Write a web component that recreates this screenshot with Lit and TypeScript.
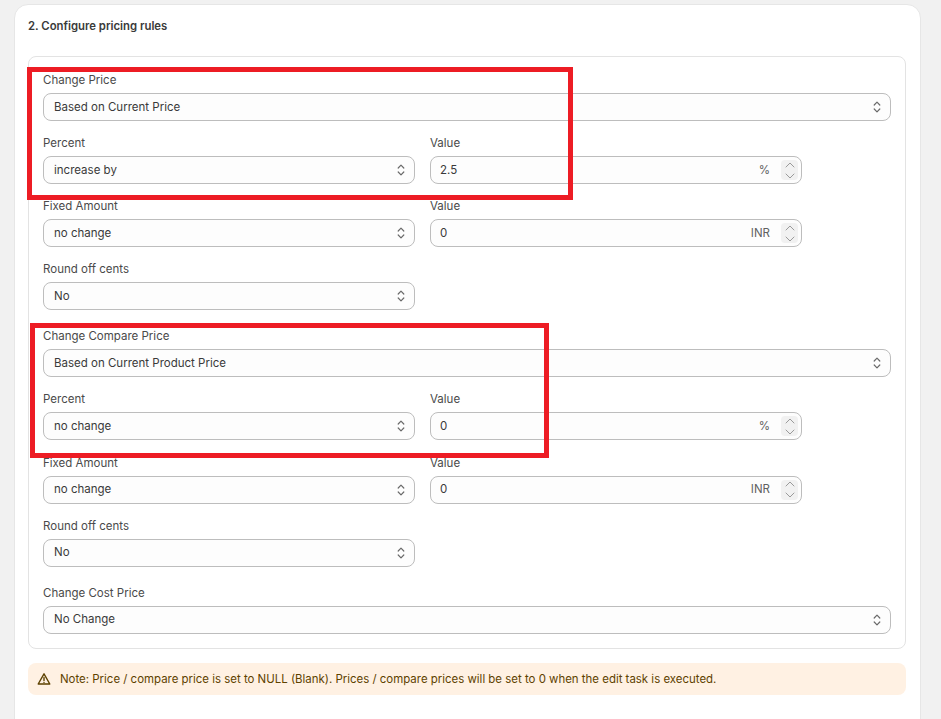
import { LitElement, html, css } from "lit";
import { customElement } from "lit/decorators.js";

const selectIcon = html`<svg class="sel-icon" viewBox="0 0 10 16" width="10" height="16" fill="none" stroke="#6a6a6a" stroke-width="1.2" stroke-linecap="round" stroke-linejoin="round"><path d="M2.2 6 5 3.2 7.8 6"/><path d="M2.2 10 5 12.8 7.8 10"/></svg>`;
const warnIcon = html`<svg class="warn-icon" viewBox="0 0 14 14" width="14" height="14" fill="none" stroke="#5e4200" stroke-width="1.4" stroke-linejoin="round" stroke-linecap="round"><path d="M7 1.8 1.2 12h11.6z"/><path d="M7 5.6v3"/><path d="M7 10.4v.1"/></svg>`;

const sel = (label: string, value: string) => html`<div class="field">
  <div class="label">${label}</div>
  <div class="control"><span class="val">${value}</span>${selectIcon}</div>
</div>`;

const num = (label: string, value: string, suffix: string) => html`<div class="field">
  <div class="label">${label}</div>
  <div class="control num">
    <span class="val">${value}</span><span class="suffix">${suffix}</span>
    <span class="stepper">
      <svg viewBox="0 0 12 6" width="12" height="6" fill="none" stroke="#9a9a9a" stroke-width="1" stroke-linecap="round" stroke-linejoin="round"><path d="M2 5l4-4 4 4"/></svg>
      <svg viewBox="0 0 12 6" width="12" height="6" fill="none" stroke="#9a9a9a" stroke-width="1" stroke-linecap="round" stroke-linejoin="round"><path d="M2 1l4 4 4-4"/></svg>
    </span>
  </div>
</div>`;

@customElement("app-root")
export class AppRoot extends LitElement {
  static styles = css`
    :host {
      display: block;
      position: relative;
      height: 719px;
      overflow: hidden;
      background: #f1f1f1;
      font-family: Inter, "Liberation Sans", sans-serif;
      font-size: 11.5px;
      color: #303030;
    }
    .card {
      box-sizing: border-box;
      width: 907px;
      height: 760px;
      margin: 4px 0 0 14px;
      padding: 14px 13px;
      background: #fff;
      border: 1px solid #e6e6e6;
      border-radius: 14px;
    }
    .title {
      font-weight: 600;
      font-size: 11.35px;
      line-height: 14px;
      color: #3a3a3a;
      margin-bottom: 23px;
    }
    .box {
      box-sizing: border-box;
      width: 878px;
      height: 593px;
      padding: 15px 14px;
      border: 1px solid #e3e3e3;
      border-radius: 8px;
      display: flex;
      flex-direction: column;
    }
    .group {
      display: flex;
      flex-direction: column;
      gap: 14.1px;
      margin-bottom: 18.1px;
    }
    .group:last-child {
      margin-bottom: 0;
    }
    .row {
      display: grid;
      grid-template-columns: 372px 372px;
      column-gap: 15px;
    }
    .field {
      display: flex;
      flex-direction: column;
    }
    .label {
      line-height: 16px;
      margin-bottom: 5px;
      color: #4a4a4a;
    }
    .control {
      box-sizing: border-box;
      height: 28px;
      display: flex;
      align-items: center;
      padding: 0 10px;
      background: #fdfdfd;
      border: 1px solid #bdbdbd;
      border-radius: 8px;
      color: #3a3a3a;
    }
    .val {
      flex: 1;
      padding-bottom: 1px;
    }
    .sel-icon {
      margin-right: -2px;
    }
    .num {
      padding: 0 3px 0 9px;
    }
    .suffix {
      color: #616161;
      margin-right: 11px;
      padding-bottom: 1px;
    }
    .stepper {
      display: flex;
      flex-direction: column;
      align-items: center;
      justify-content: center;
      gap: 5px;
      width: 17px;
      height: 20px;
      background: #f1f1f1;
      border-radius: 4px;
    }
    .note {
      box-sizing: border-box;
      width: 878px;
      height: 32px;
      margin-top: 14px;
      padding: 0 9px;
      display: flex;
      align-items: center;
      gap: 9px;
      font-size: 11.45px;
      background: #fff1e3;
      border-radius: 8px;
      color: #5e4200;
    }
    .note span {
      padding-bottom: 1px;
    }
    .mark {
      position: absolute;
      box-sizing: border-box;
      border: 5px solid #ed1c24;
      pointer-events: none;
    }
    .mark-a {
      left: 27px;
      top: 67px;
      width: 546px;
      height: 133px;
    }
    .mark-b {
      left: 30px;
      top: 323px;
      width: 519px;
      height: 135px;
    }
  `;

  render() {
    return html`
      <div class="card">
        <div class="title">2. Configure pricing rules</div>
        <div class="box">
          <div class="group">
            ${sel("Change Price", "Based on Current Price")}
            <div class="row">${sel("Percent", "increase by")}${num("Value", "2.5", "%")}</div>
            <div class="row">${sel("Fixed Amount", "no change")}${num("Value", "0", "INR")}</div>
            <div class="row">${sel("Round off cents", "No")}</div>
          </div>
          <div class="group">
            ${sel("Change Compare Price", "Based on Current Product Price")}
            <div class="row">${sel("Percent", "no change")}${num("Value", "0", "%")}</div>
            <div class="row">${sel("Fixed Amount", "no change")}${num("Value", "0", "INR")}</div>
            <div class="row">${sel("Round off cents", "No")}</div>
          </div>
          <div class="group">${sel("Change Cost Price", "No Change")}</div>
        </div>
        <div class="note">${warnIcon}<span>Note: Price / compare price is set to NULL (Blank). Prices / compare prices will be set to 0 when the edit task is executed.</span></div>
      </div>
      <div class="mark mark-a"></div>
      <div class="mark mark-b"></div>
    `;
  }
}
